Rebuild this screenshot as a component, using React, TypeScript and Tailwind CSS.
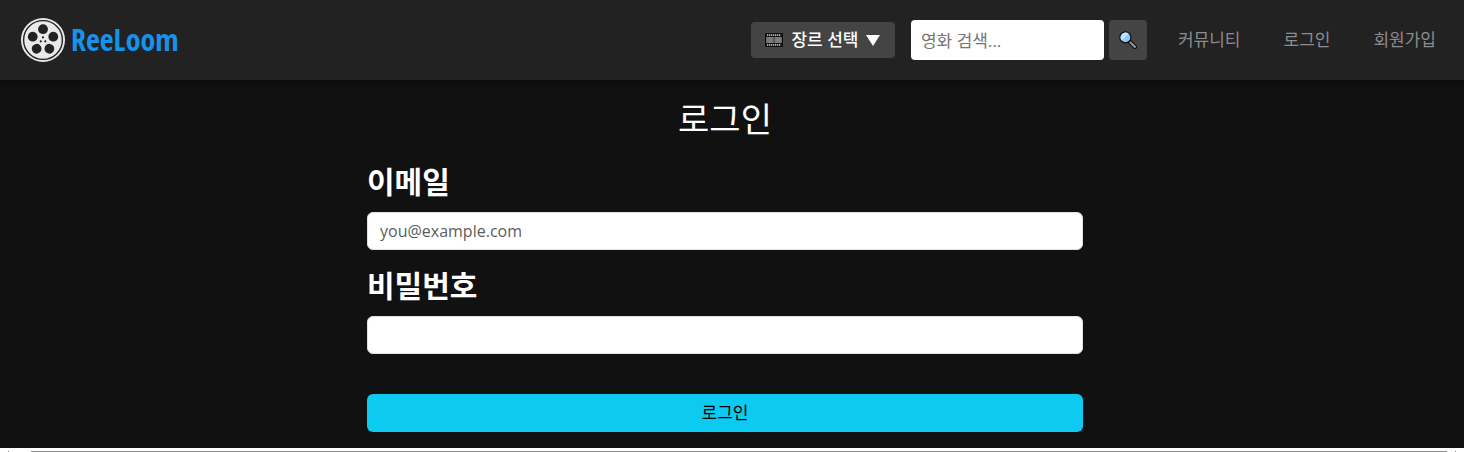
import React from "react";

function ReelLogo() {
  const holes = [0, 72, 144, 216, 288];
  const dots = [0, 120, 240];
  return (
    <svg viewBox="0 0 44 44" className="size-11 shrink-0" aria-hidden="true">
      <circle cx="22" cy="22" r="22" fill="#e9e9e9" />
      <circle cx="22" cy="22" r="19.4" fill="none" stroke="#222222" strokeWidth="1.4" />
      {holes.map((a) => (
        <circle key={a} cx="22" cy="11.2" r="4.9" fill="#222222" transform={`rotate(${a} 22 22)`} />
      ))}
      {dots.map((a) => (
        <circle key={a} cx="22" cy="19.4" r="1.1" fill="#222222" transform={`rotate(${a} 22 22)`} />
      ))}
    </svg>
  );
}

function FilmIcon() {
  const perforations = [2, 4, 6, 8, 10, 12, 14];
  return (
    <svg viewBox="0 0 18 14" className="h-3.5 w-[18px] shrink-0" aria-hidden="true">
      <rect width="18" height="14" fill="#111111" />
      {perforations.map((x) => (
        <g key={x} fill="#b4b4b4">
          <rect x={x} y="1.2" width="1.3" height="1.8" />
          <rect x={x} y="11" width="1.3" height="1.8" />
        </g>
      ))}
      <rect x="1.2" y="4" width="7.5" height="6" fill="#7a7a7a" />
      <rect x="9.3" y="4" width="7.5" height="6" fill="#7a7a7a" />
    </svg>
  );
}

function SearchIcon() {
  return (
    <svg viewBox="0 0 18 18" className="size-[18px]" aria-hidden="true">
      <path d="M10.5 10.5 16 16" stroke="#0b0b0b" strokeWidth="4.2" strokeLinecap="round" />
      <path d="m11.5 11.5 4.4 4.4" stroke="#8b9698" strokeWidth="2.2" strokeLinecap="round" />
      <circle cx="6.4" cy="6.4" r="5.5" fill="#8fc7f3" stroke="#0b0b0b" strokeWidth="1.2" />
      <path d="M2.8 9.6A4.9 4.9 0 0 1 9.8 2.8Z" fill="#c3e2fa" />
    </svg>
  );
}

const links = ["커뮤니티", "로그인", "회원가입"];
const field =
  "block h-[38px] w-full rounded-md border border-[#dee2e6] bg-white px-3 text-base text-[#212529] placeholder:text-[#595c5f]";

export default function App() {
  return (
    <div className="bg-[#111111] font-['Open_Sans','Noto_Sans_CJK_KR',sans-serif] text-white">
      <header className="relative flex h-20 items-center justify-between bg-[#222222] pr-7 pl-[21px] shadow-[0_2px_8px_rgba(0,0,0,0.5)]">
        <a href="#" className="flex items-center gap-1.5">
          <ReelLogo />
          <span className="font-['Open_Sans_Condensed','Roboto_Condensed','Liberation_Sans_Narrow','Noto_Sans',sans-serif] text-[30px] leading-10 font-bold text-[#1593ea]">
            ReeLoom
          </span>
        </a>
        <div className="flex items-center">
          <button type="button" className="flex h-9 w-36 items-center justify-center gap-2 rounded bg-[#444444] text-[17px] font-medium">
            <FilmIcon />
            <span>장르 선택</span>
            <svg viewBox="0 0 14 11" className="h-[11px] w-3.5" aria-hidden="true">
              <path d="M0 0h14L7 11Z" fill="#ffffff" />
            </svg>
          </button>
          <form className="ml-4 flex gap-[5px]" onSubmit={(e) => e.preventDefault()}>
            <input
              type="text"
              aria-label="영화 검색"
              placeholder="영화 검색..."
              className="h-10 w-[193px] rounded bg-white px-2.5 text-[17px] text-black placeholder:text-[#757575]"
            />
            <button type="submit" aria-label="검색" className="flex h-10 w-[38px] items-center justify-center rounded bg-[#444444]">
              <SearchIcon />
            </button>
          </form>
          <nav className="ml-[31px] flex gap-[43px]">
            {links.map((label) => (
              <a key={label} href="#" className="text-[17px] leading-6 text-[#8c8c8c]">
                {label}
              </a>
            ))}
          </nav>
        </div>
      </header>

      <main className="pt-4 pr-3.5 pb-4">
        <form className="mx-auto w-full max-w-[716px]" onSubmit={(e) => e.preventDefault()}>
          <h1 className="text-center text-[34px] leading-[46px] font-normal">로그인</h1>
          <label htmlFor="email" className="mt-[18px] mb-2 block text-[30px] leading-11 font-bold">
            이메일
          </label>
          <input id="email" type="email" placeholder="you@example.com" className={field} />
          <label htmlFor="password" className="mt-3.5 mb-2 block text-[30px] leading-11 font-bold">
            비밀번호
          </label>
          <input id="password" type="password" className={field} />
          <button type="submit" className="mt-10 block h-[38px] w-full rounded-md bg-[#0dcaf0] text-[17px] text-black">
            로그인
          </button>
        </form>
      </main>

      <div className="flex h-1 items-end justify-between bg-white px-2" aria-hidden="true">
        <span className="size-px bg-[#777777]" />
        <span className="mr-2 ml-[22px] h-px grow bg-[#8a8a8a]" />
        <span className="size-px bg-[#777777]" />
      </div>
    </div>
  );
}
